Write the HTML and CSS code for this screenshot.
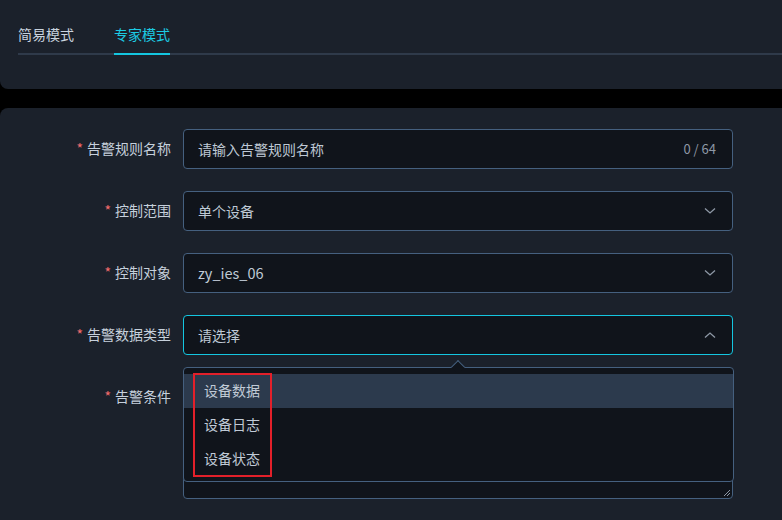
FILE: index.html
```html
<!DOCTYPE html>
<html lang="zh-CN">
<head>
    <meta charset="UTF-8">
    <title>告警规则</title>
    <link rel="stylesheet" href="styles.css">
</head>
<body>
    <div class="card top-card">
        <div class="tabs">
            <div class="tab">简易模式</div>
            <div class="tab active">专家模式</div>
        </div>
    </div>

    <div class="card form-card">
        <div class="row">
            <label class="label"><span class="star">*</span>告警规则名称</label>
            <div class="field">
                <span class="placeholder">请输入告警规则名称</span>
                <span class="count">0 / 64</span>
            </div>
        </div>
        <div class="row">
            <label class="label"><span class="star">*</span>控制范围</label>
            <div class="field">
                <span class="value">单个设备</span>
                <svg class="chev" width="12" height="8" viewBox="0 0 12 8"><path d="M1 1.5 L6 6 L11 1.5" fill="none" stroke="#8e98a6" stroke-width="1.3"/></svg>
            </div>
        </div>
        <div class="row">
            <label class="label"><span class="star">*</span>控制对象</label>
            <div class="field">
                <span class="value latin">zy_ies_06</span>
                <svg class="chev" width="12" height="8" viewBox="0 0 12 8"><path d="M1 1.5 L6 6 L11 1.5" fill="none" stroke="#8e98a6" stroke-width="1.3"/></svg>
            </div>
        </div>
        <div class="row select-row">
            <label class="label"><span class="star">*</span>告警数据类型</label>
            <div class="field focus">
                <span class="placeholder">请选择</span>
                <svg class="chev" width="12" height="8" viewBox="0 0 12 8"><path d="M1 6.5 L6 2 L11 6.5" fill="none" stroke="#8e98a6" stroke-width="1.3"/></svg>
            </div>
            <div class="dropdown">
                <div class="arrow"></div>
                <div class="option hover">设备数据</div>
                <div class="option">设备日志</div>
                <div class="option">设备状态</div>
                <div class="mark"></div>
            </div>
        </div>
        <div class="row">
            <label class="label area-label"><span class="star">*</span>告警条件</label>
            <div class="field area">
                <svg class="grip" width="8" height="8" viewBox="0 0 8 8"><path d="M1 7 L7 1 M4 7 L7 4" stroke="#8e98a6" stroke-width="1"/></svg>
            </div>
        </div>
    </div>
</body>
</html>
```

FILE: styles.css
```css
* {
    box-sizing: border-box;
}
body {
    margin: 0;
    background: #000;
    font-family: "Noto Sans CJK SC", "Noto Sans", sans-serif;
    font-size: 14px;
    color: #c6d0dc;
    overflow: hidden;
}
.card {
    background: #1b212b;
}
.top-card {
    height: 89px;
    padding: 24px 0 0 18px;
    border-radius: 0 0 0 8px;
}
.tabs {
    display: flex;
    gap: 40px;
    border-bottom: 2px solid #2f3a4a;
}
.tab {
    line-height: 20px;
    padding-bottom: 9px;
    margin-bottom: -2px;
    border-bottom: 2px solid transparent;
    color: #c9d3de;
}
.tab.active {
    color: #1ccbe3;
    border-bottom-color: #14c6e0;
}
.form-card {
    margin-top: 19px;
    height: 420px;
    padding-top: 21px;
    border-radius: 8px 0 0 0;
}
.row {
    display: flex;
    margin-bottom: 22px;
    position: relative;
}
.label {
    width: 183px;
    padding-right: 12px;
    text-align: right;
    line-height: 38px;
    color: #c6d0dc;
}
.star {
    color: #f26b6b;
    margin-right: 4px;
}
.field {
    width: 550px;
    height: 40px;
    background: #10141b;
    border: 1px solid #45607f;
    border-radius: 4px;
    display: flex;
    align-items: center;
    justify-content: space-between;
    padding: 0 16px 1px 14px;
    position: relative;
}
.field.focus {
    border-color: #14c6e0;
}
.placeholder, .value {
    color: #bfc9d5;
}
.latin {
    font-size: 14.5px;
}
.count {
    color: #8e98a6;
    font-size: 13px;
}
.field.area {
    height: 122px;
}
.grip {
    position: absolute;
    right: 1px;
    bottom: 1px;
}
.dropdown {
    position: absolute;
    left: 183px;
    top: 52px;
    width: 551px;
    background: #10141b;
    border: 1px solid #45607f;
    border-radius: 4px;
    padding: 6px 0 5px;
    z-index: 2;
}
.arrow {
    position: absolute;
    top: -6px;
    left: 269px;
    width: 10px;
    height: 10px;
    background: #10141b;
    border-top: 1px solid #45607f;
    border-left: 1px solid #45607f;
    transform: rotate(45deg);
}
.option {
    height: 34px;
    line-height: 32px;
    padding-left: 20px;
    color: #c0cad6;
}
.option.hover {
    background: #2c3a4d;
}
.mark {
    position: absolute;
    left: 9px;
    top: 5px;
    width: 79px;
    height: 104px;
    border: 2px solid #e3202a;
}
```
